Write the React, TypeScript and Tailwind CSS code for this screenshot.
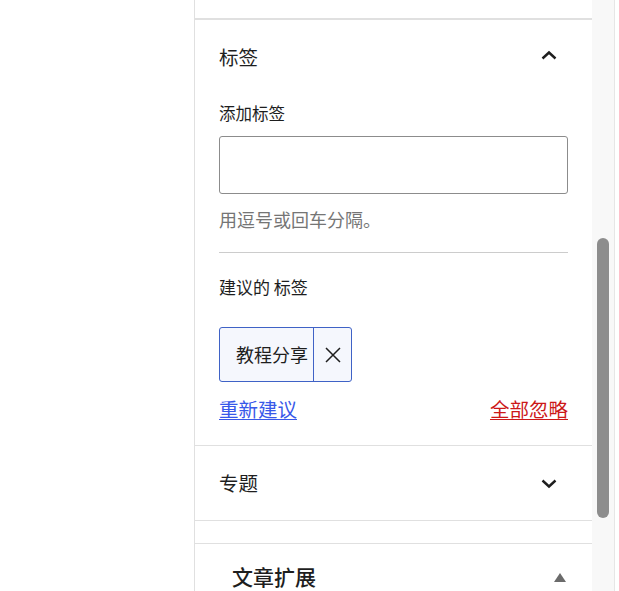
import React from "react";

const font = { fontFamily: '"Noto Sans CJK SC", "Noto Sans", sans-serif' };

function ChevronUp() {
  return (
    <svg width="16" height="10" viewBox="0 0 16 10" fill="none">
      <polyline points="1.5,8.5 8,2.5 14.5,8.5" stroke="#1e1e1e" strokeWidth="2.4" />
    </svg>
  );
}

function ChevronDown() {
  return (
    <svg width="16" height="10" viewBox="0 0 16 10" fill="none">
      <polyline points="1.5,1.5 8,7.5 14.5,1.5" stroke="#1e1e1e" strokeWidth="2.4" />
    </svg>
  );
}

export default function App() {
  return (
    <div className="flex w-[619px] h-[591px] overflow-hidden bg-white text-[#1e1e1e]" style={font}>
      <div className="w-[194px] shrink-0 bg-white" />
      <div className="w-px shrink-0 bg-[#e0e0e0]" />

      <div className="w-[397px] shrink-0 flex flex-col">
        <div className="h-[20px] shrink-0 border-b-2 border-[#e0e0e0]" />

        {/* 标签 */}
        <div className="px-6 border-b border-[#e0e0e0]">
          <div className="flex items-center justify-between h-[26px] mt-[24px]">
            <span className="text-[19.5px] leading-[26px]">标签</span>
            <span className="mr-[11px] mt-[-5px]"><ChevronUp /></span>
          </div>
          <div className="mt-[32px] text-[16.5px] leading-[22px]">添加标签</div>
          <div className="mt-[12px] h-[58px] border border-[#8c8c8c] rounded-[3px]" />
          <div className="mt-[13px] text-[18px] leading-[24px] text-[#757575]">用逗号或回车分隔。</div>
          <div className="mt-[21px] border-t border-[#cccccc]" />
          <div className="mt-[22px] text-[17px] leading-[24px]">建议的 标签</div>
          <div className="mt-[28px] flex">
            <div className="flex h-[55px] border border-[#3f62c6] rounded-[3px] bg-[#f5f7fd]">
              <span className="flex items-center pl-[16px] pr-[5px] text-[18px]">教程分享</span>
              <span className="w-[38px] border-l border-[#3f62c6] flex items-center justify-center">
                <svg width="16" height="16" viewBox="0 0 16 16" fill="none">
                  <path d="M1 1L15 15M15 1L1 15" stroke="#1e1e1e" strokeWidth="1.5" />
                </svg>
              </span>
            </div>
          </div>
          <div className="mt-[14px] mb-[23px] flex justify-between text-[19.5px] leading-[26px]">
            <a className="text-[#3858e9] underline underline-offset-2 cursor-pointer">重新建议</a>
            <a className="text-[#cc1818] underline underline-offset-2 cursor-pointer">全部忽略</a>
          </div>
        </div>

        {/* 专题 */}
        <div className="px-6 h-[75px] shrink-0 flex items-center justify-between border-b border-[#e0e0e0]">
          <span className="text-[19.5px] leading-[26px]">专题</span>
          <span className="mr-[11px] mt-[2px]"><ChevronDown /></span>
        </div>

        <div className="h-[23px] shrink-0 border-b border-[#e0e0e0]" />

        {/* 文章扩展 */}
        <div className="pl-[37px] pr-[26px] mt-[18px] flex items-center justify-between">
          <span className="text-[21px] leading-[28px] font-medium">文章扩展</span>
          <svg width="12" height="9" viewBox="0 0 12 9" className="mt-[2px]">
            <polygon points="6,0 12,9 0,9" fill="#6b6b6b" />
          </svg>
        </div>
      </div>

      {/* scrollbar */}
      <div className="w-[22px] shrink-0 bg-[#f8f8f8] pt-[238px]">
        <div className="ml-[5px] w-[12px] h-[280px] rounded-full bg-[#8d8d8d]" />
      </div>
      <div className="w-px shrink-0 bg-[#e6e6e6]" />
      <div className="flex-1 bg-white" />
    </div>
  );
}
